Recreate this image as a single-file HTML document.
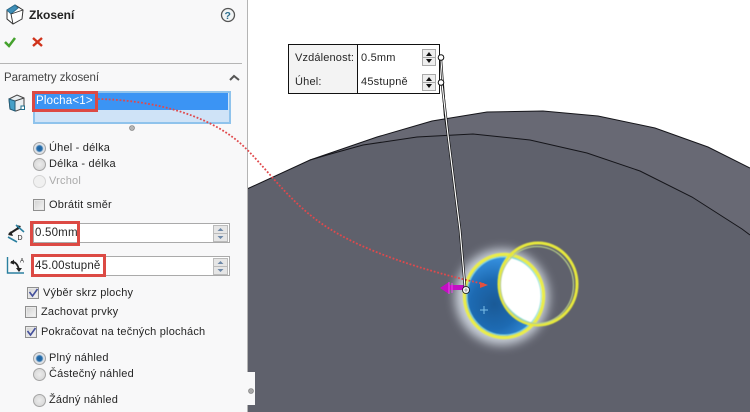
<!DOCTYPE html>
<html><head><meta charset="utf-8">
<style>
html,body{margin:0;padding:0;background:#fff}
#r{position:relative;width:750px;height:412px;overflow:hidden;background:#fff;font-family:"Liberation Sans",sans-serif;color:#262626}
.t{position:absolute;font-size:11px;line-height:14px;white-space:nowrap;letter-spacing:.2px}
#p{position:absolute;left:0;top:0;width:247px;height:412px;background:#f8f8f9}
.rad{position:absolute;width:11px;height:11px;border-radius:50%;border:1px solid #a5a5a5;background:radial-gradient(circle at 50% 50%,#ececec,#d2d2d2)}
.rad.on{background:radial-gradient(circle at 50% 50%,#1a5f9e 0,#2a70ad 34%,#dfe4ea 52%,#d4d4d4 100%)}
.rad.dis{border-color:#d5d5d5;background:#f0f0f0}
.cb{position:absolute;width:10px;height:10px;border:1px solid #8f8f8f;background:linear-gradient(135deg,#d0d0d0,#f6f6f6);box-shadow:0 0 0 1px #e8e8e8 inset}
.inp{position:absolute;left:33px;width:197px;height:20px;border:1px solid #aaa;background:#fff;box-sizing:border-box}
.spin{position:absolute;left:213px;width:15px;height:17px;background:#e6e6e6;border:1px solid #bbb;box-sizing:border-box}
.red{position:absolute;border:3px solid #dc4a44;box-sizing:border-box}
</style></head><body><div id="r">
<svg style="position:absolute;left:0;top:0" width="750" height="412" viewBox="0 0 750 412">
<defs>
<radialGradient id="g" cx="0.38" cy="0.6" r="0.66"><stop offset="0" stop-color="#1a5a97"/><stop offset=".45" stop-color="#1d6ab2"/><stop offset="1" stop-color="#3f9ff0"/></radialGradient>
<filter id="b" x="-50%" y="-50%" width="200%" height="200%"><feGaussianBlur stdDeviation="5"/></filter>
<filter id="s" x="-10%" y="-10%" width="120%" height="120%"><feGaussianBlur stdDeviation=".4"/></filter>
</defs>
<polygon fill="#686974" points="247,189 310,160 377,137 432,121 487,112 543,111 598,116 655,128 708,147 750,168 750,412 247,412"/>
<polygon fill="#5f616c" points="247,189 310,160 327,155 363,145 417,137 473,134 530,140 587,153 640,171 692,197 742,229 750,235 750,412 247,412"/>
<polyline fill="none" stroke="#15151a" stroke-width="1" points="247,189 310,160 377,137 432,121 487,112 543,111 598,116 655,128 708,147 750,168"/>
<polyline fill="none" stroke="#15151a" stroke-width="1" points="310,160 327,155 363,145 417,137 473,134 530,140 587,153 640,171 692,197 742,229 750,235"/>
<ellipse cx="502" cy="297" rx="47" ry="48" fill="#e4ecf5" opacity=".8" filter="url(#b)"/>
<ellipse cx="504" cy="296" rx="39.500" ry="41.500" fill="url(#g)"/>
<g filter="url(#s)">
<path d="M507 257 C500 266 497 276 499 287 C501 303 514 318 532 323 C541 313 544 300 542 288 C539 274 527 260 507 257Z" fill="#fff" stroke="#80e0dc" stroke-width="1"/>
<ellipse cx="504" cy="296" rx="39.500" ry="41.500" fill="none" stroke="#e9ec4c" stroke-width="3.400"/>
<ellipse cx="504" cy="296" rx="37" ry="39" fill="none" stroke="#8fe3df" stroke-width="1"/>
<ellipse cx="538" cy="284" rx="39" ry="41" fill="none" stroke="#e6e83c" stroke-width="3"/>
<ellipse cx="537" cy="285" rx="36.500" ry="38.500" fill="none" stroke="#b8cf8a" stroke-width="1.200"/>
</g>
<path d="M484 306v8M480 310h8" stroke="#7cc0ea" stroke-width="1"/>
<path d="M247.500 0V412" stroke="#b4b4b4" stroke-width="1"/>
<path d="M247 372 h8 v33 h-8z" fill="#f8f8f9"/>
<circle cx="251" cy="391" r="2.500" fill="#a8a8a8" stroke="#777" stroke-width=".6"/>
</svg>

<div id="p"></div>
<svg style="position:absolute;left:0;top:0" width="247" height="412" viewBox="0 0 247 412">
<path d="M7 10 L15 5 L23 10 L22 19 L13 24 L7 19Z" fill="#fff" stroke="#333" stroke-width="1"/>
<path d="M7 10 L15 5 L18 8 L11 14Z" fill="#3f8fb8" stroke="#2b6f92"/>
<path d="M11 14 L13 24 M11 14 L23 10" stroke="#333" fill="none" stroke-width=".9"/>
<path d="M5 42 L9 46 L15 38" fill="none" stroke="#45a22e" stroke-width="2.500"/>
<path d="M33 38 L42 46 M42 38 L33 46" stroke="#d0331c" stroke-width="2.400"/>
<circle cx="228" cy="15" r="6.500" fill="#f1f4f5" stroke="#555" stroke-width="1.300"/>
<text x="224.500" y="19" font-family="Liberation Sans" font-size="10.500" font-weight="bold" fill="#2a6e8e">?</text>
<path d="M0 63.500H242" stroke="#b5b5b5"/>
<path d="M230 80 L234 76 L239 80" fill="none" stroke="#555" stroke-width="2"/>
<path d="M9 99 L17 95 L24 98 V108 L16 111 L10 109Z" fill="#e9eef1" stroke="#444"/>
<path d="M9 99 L15 101 V111 L10 109Z" fill="#45a0c8" stroke="#235c78"/>
<path d="M15 101 L24 98" stroke="#444"/>
<rect x="21" y="106" width="3.500" height="3.500" fill="#fff" stroke="#1f6f8c"/>
<circle cx="132" cy="128" r="2.500" fill="#b4b4b4" stroke="#777" stroke-width=".6"/>
<path d="M9 234 L20 227" stroke="#222" stroke-width="2" fill="none"/>
<path d="M8 235 l5 1 -2 -5z M21 226 l-5 -1 2 5z" fill="#222"/>
<path d="M16 225 L24 232 M8 237 L17 242" stroke="#2a7f9f" stroke-width="1.600" fill="none"/>
<text x="17.500" y="240" font-family="Liberation Sans" font-size="7" fill="#222">D</text>
<path d="M7.500 257 V273 H24" fill="none" stroke="#2a7f9f" stroke-width="1.400"/>
<path d="M11 262 Q17 261 19 270" fill="none" stroke="#222" stroke-width="1.800"/>
<path d="M10 263 l4-3.500 0 5z M16 268 l6 0 -3 4z" fill="#222"/>
<text x="20" y="262.500" font-family="Liberation Sans" font-size="6" fill="#222">A</text>
</svg>

<div class="t" style="left:29px;top:8px;font-size:12px;font-weight:bold;letter-spacing:0;color:#222">Zkosení</div>
<div class="t" style="left:4px;top:71px;font-size:11.500px;letter-spacing:-.05px;color:#444">Parametry zkosení</div>

<div style="position:absolute;left:33px;top:91px;width:198px;height:33px;background:#cfe3f7;border:2px solid #8fc3ec;box-sizing:border-box"></div>
<div style="position:absolute;left:35px;top:93px;width:193px;height:17px;background:#3b94f4"></div>
<div class="t" style="left:36px;top:94px;color:#fff;font-size:11.500px">Plocha&lt;1&gt;</div>
<div class="red" style="left:32px;top:91px;width:66px;height:21px"></div>

<div class="rad on" style="left:33px;top:142px"></div><div class="t" style="left:49px;top:141px">Úhel - délka</div>
<div class="rad" style="left:33px;top:158px"></div><div class="t" style="left:49px;top:157px">Délka - délka</div>
<div class="rad dis" style="left:33px;top:175px"></div><div class="t" style="left:49px;top:174px;color:#aaa">Vrchol</div>
<div class="cb" style="left:33px;top:199px"></div><div class="t" style="left:49px;top:198px">Obrátit směr</div>

<div class="inp" style="top:223px"></div>
<div class="t" style="left:35px;top:226px;font-size:11.500px">0.50mm</div>
<div class="spin" style="top:225px"></div>
<div class="inp" style="top:256px"></div>
<div class="t" style="left:35px;top:259px;font-size:11.500px">45.00stupně</div>
<div class="spin" style="top:258px"></div>
<svg style="position:absolute;left:213px;top:225px" width="15" height="50" viewBox="0 0 15 50">
<path d="M0 8.500H15M0 41.500H15" stroke="#bbb"/>
<path d="M7.500 3l3 3h-6zM7.500 14l3-3h-6zM7.500 36l3 3h-6zM7.500 47l3-3h-6z" fill="#6d88a8"/>
</svg>
<div class="red" style="left:30px;top:221px;width:50px;height:25px"></div>
<div class="red" style="left:31px;top:254px;width:75px;height:23px"></div>

<div class="cb" style="left:27px;top:287px"></div><div class="t" style="left:43px;top:286px">Výběr skrz plochy</div>
<div class="cb" style="left:25px;top:306px"></div><div class="t" style="left:41px;top:305px">Zachovat prvky</div>
<div class="cb" style="left:25px;top:326px"></div><div class="t" style="left:41px;top:325px">Pokračovat na tečných plochách</div>
<svg style="position:absolute;left:0;top:0" width="60" height="345" viewBox="0 0 60 345">
<path d="M29.500 292l3 4 5-7" fill="none" stroke="#44509c" stroke-width="1.600"/>
<path d="M27.500 331l3 4 5-7" fill="none" stroke="#44509c" stroke-width="1.600"/>
</svg>

<div class="rad on" style="left:33px;top:352px"></div><div class="t" style="left:49px;top:351px">Plný náhled</div>
<div class="rad" style="left:33px;top:368px"></div><div class="t" style="left:49px;top:367px">Částečný náhled</div>
<div class="rad" style="left:33px;top:394px"></div><div class="t" style="left:49px;top:393px">Žádný náhled</div>

<div style="position:absolute;left:288px;top:44px;width:152px;height:50px;background:#fff;border:1px solid #111;box-sizing:border-box"></div>
<div style="position:absolute;left:289px;top:45px;width:68px;height:48px;background:#f3f3f3;border-right:1px solid #111"></div>
<div class="t" style="left:295px;top:51px;letter-spacing:.15px">Vzdálenost:</div>
<div class="t" style="left:295px;top:75px">Úhel:</div>
<div class="t" style="left:361px;top:51px">0.5mm</div>
<div class="t" style="left:361px;top:75px">45stupně</div>
<svg style="position:absolute;left:422px;top:49px" width="15" height="42" viewBox="0 0 15 42">
<rect x=".5" y=".5" width="13" height="16" fill="#eee" stroke="#aaa"/><rect x=".5" y="25.500" width="13" height="16" fill="#eee" stroke="#aaa"/>
<path d="M0 8.500H14M0 33.500H14" stroke="#aaa"/>
<path d="M7 3l3 4h-6zM7 14l3-4h-6zM7 28l3 4h-6zM7 39l3-4h-6z" fill="#111"/>
</svg>

<svg style="position:absolute;left:0;top:0" width="750" height="412" viewBox="0 0 750 412">
<path d="M98 99 C150 100 205 113 240 143 C265 165 290 205 330 229 C365 251 420 270 484 284" fill="none" stroke="#e0494c" stroke-width="1.800" stroke-dasharray="1.800 1.800"/>
<path d="M480 282l8 3-8 3z" fill="#e2503f"/>
<path d="M440 288l9-6v3h15v5h-15v4z" fill="#c30fc3"/>
<path d="M449 282v12M452 283v10" stroke="#ef40ef" stroke-width="1"/>
<path d="M441 60 L445 115 L448 135" fill="none" stroke="#111" stroke-width="2.400"/>
<path d="M441 60 L445 115 L448 135" fill="none" stroke="#fff" stroke-width="1"/>
<path d="M442 84 L448 135 L460 230 L465 287" fill="none" stroke="#111" stroke-width="2.600"/>
<path d="M442 84 L448 135 L460 230 L465 287" fill="none" stroke="#fff" stroke-width="1.200"/>
<circle cx="441" cy="57.500" r="2.800" fill="#fff" stroke="#111"/>
<circle cx="441" cy="82.500" r="2.800" fill="#fff" stroke="#111"/>
<circle cx="466" cy="290" r="3.500" fill="#fff" stroke="#111" stroke-width=".8"/>
<path d="M463.500 290h5M466 287.500v5" stroke="#666" stroke-width=".6"/>
</svg>
</div></body></html>
